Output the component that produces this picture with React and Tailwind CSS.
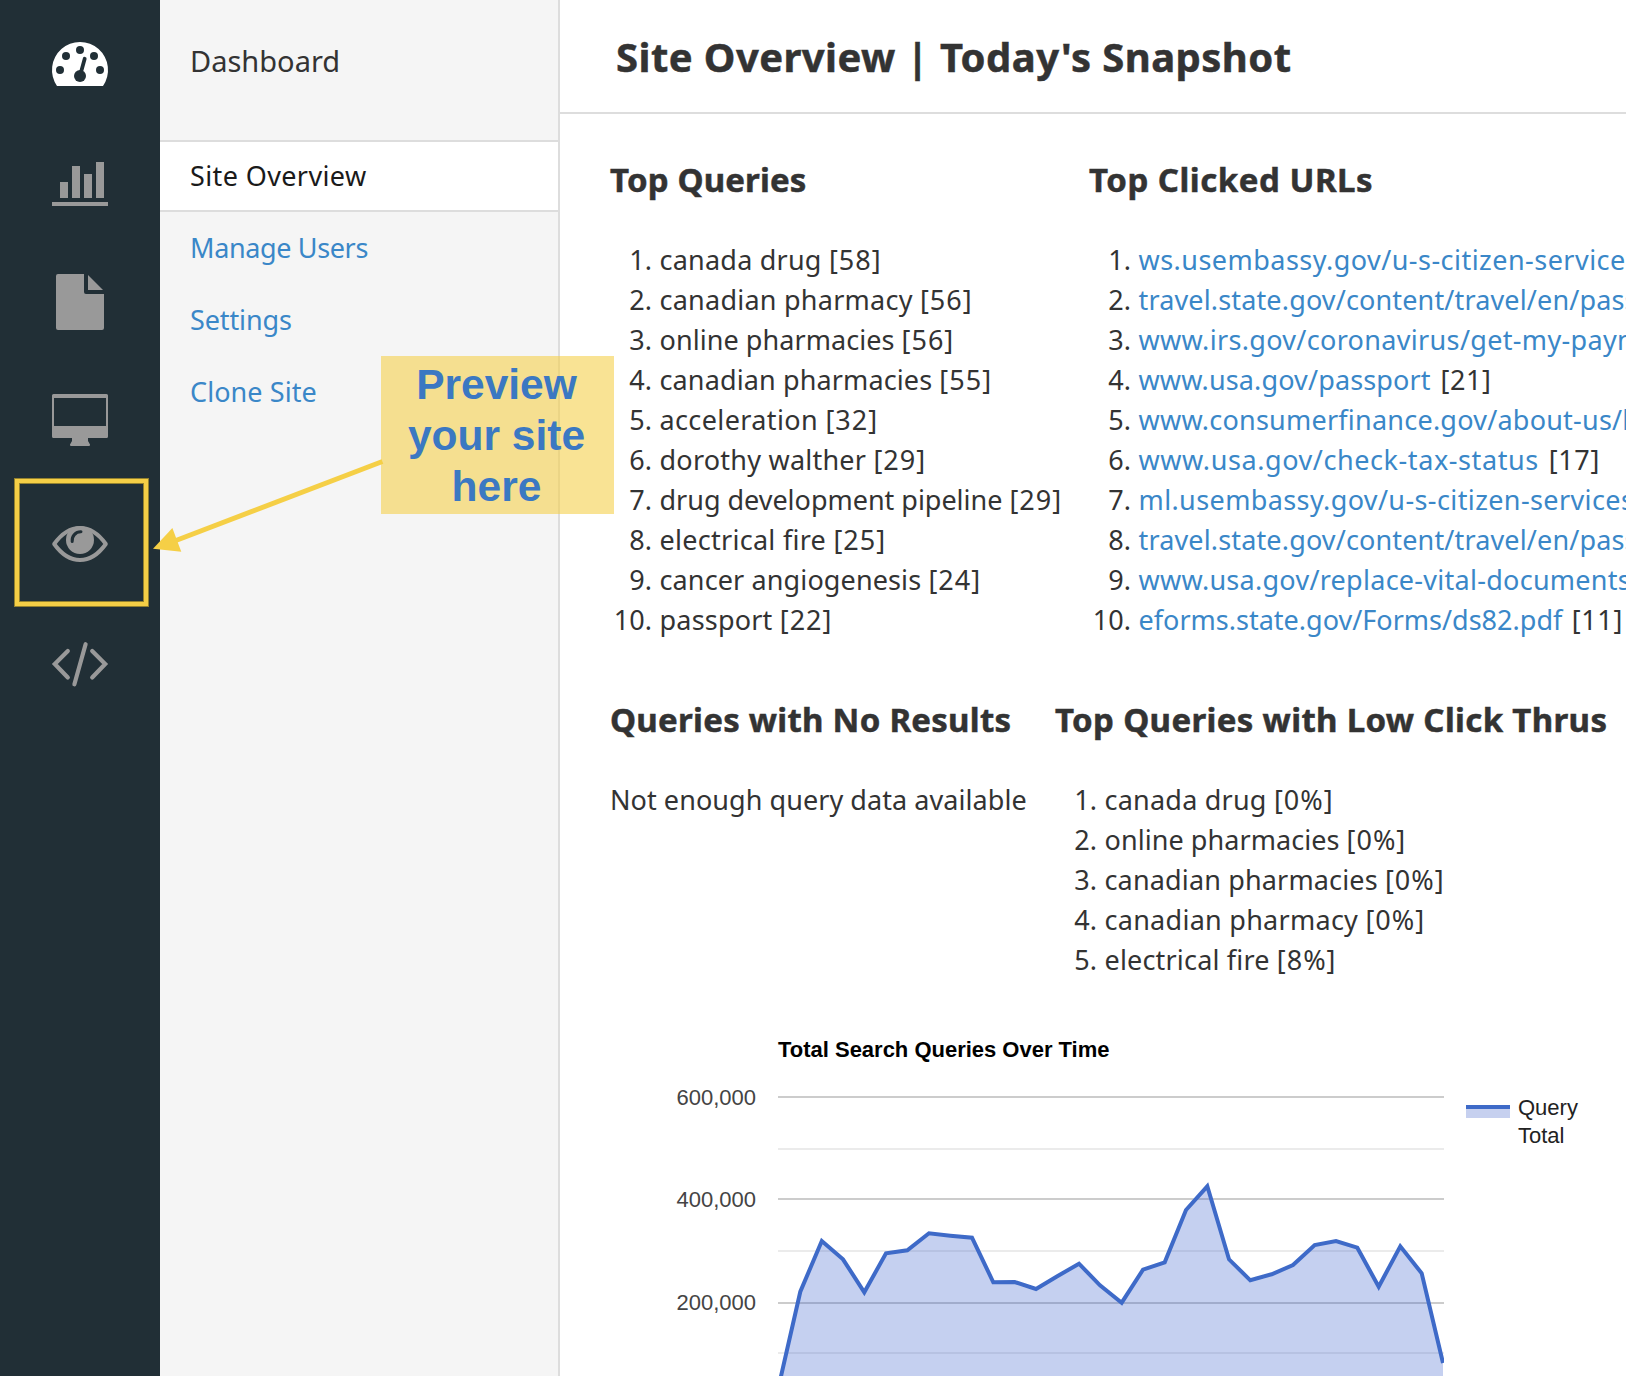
import React from "react";

const TOP_QUERIES = [
  ["canada drug", "tracking-[0.22px]", "[58]"],
  ["canadian pharmacy", "tracking-[0.24px]", "[56]"],
  ["online pharmacies", "tracking-[0.06px]", "[56]"],
  ["canadian pharmacies", "tracking-[0.12px]", "[55]"],
  ["acceleration", "tracking-[0.38px]", "[32]"],
  ["dorothy walther", "tracking-[0.23px]", "[29]"],
  ["drug development pipeline", "tracking-[-0.02px]", "[29]"],
  ["electrical fire", "tracking-[0.28px]", "[25]"],
  ["cancer angiogenesis", "tracking-[0.12px]", "[24]"],
  ["passport", "tracking-[0.2px]", "[22]"],
];

const TOP_URLS = [
  ["ws.usembassy.gov/u-s-citizen-services/", "tracking-[0.47px]"],
  ["travel.state.gov/content/travel/en/passports", "tracking-[0.15px]"],
  ["www.irs.gov/coronavirus/get-my-payment", "tracking-[0.33px]"],
  ["www.usa.gov/passport", "tracking-[0.14px]", "[21]"],
  ["www.consumerfinance.gov/about-us/blog", "tracking-[0.23px]"],
  ["www.usa.gov/check-tax-status", "tracking-[0.58px]", "[17]"],
  ["ml.usembassy.gov/u-s-citizen-services/", "tracking-[0.39px]"],
  ["travel.state.gov/content/travel/en/passports", "tracking-[0.15px]"],
  ["www.usa.gov/replace-vital-documents", "tracking-[0.27px]"],
  ["eforms.state.gov/Forms/ds82.pdf", "tracking-[0.01px]", "[11]"],
];

const LOW_CLICK = [
  ["canada drug", "tracking-[0.22px]", "[0%]"],
  ["online pharmacies", "tracking-[0.06px]", "[0%]"],
  ["canadian pharmacies", "tracking-[0.15px]", "[0%]"],
  ["canadian pharmacy", "tracking-[0.27px]", "[0%]"],
  ["electrical fire", "tracking-[0.18px]", "[8%]"],
];

const SERIES =
  "779,1385 800.3,1291.7 821.8,1241 843,1259.3 864.3,1292.3 886,1253.3 907.3,1250.3 929,1233.3 950.3,1235.7 972,1237.7 993.3,1282.3 1014.7,1282 1036,1289 1057.7,1276 1079,1263.7 1100,1285.3 1121.7,1302.7 1143,1269.7 1164.7,1262.3 1186,1210 1207.3,1186.3 1229,1259.3 1250.3,1280.3 1271.7,1274.3 1293,1265 1314.7,1245 1336,1241 1357.3,1247.7 1378.7,1286.7 1400.3,1246.3 1421.7,1273.3 1443,1363";

function RailIcon({ active, children }) {
  return (
    <a className={`flex h-[120px] items-center justify-center ${active ? "text-white" : "text-[#999999]"}`}>
      <svg className="overflow-visible" width="56" height="56" viewBox="0 0 56 56" fill="currentColor">
        {children}
      </svg>
    </a>
  );
}

function Rail() {
  return (
    <nav className="h-full w-[160px] shrink-0 bg-[#212f36] pt-1">
      <RailIcon active>
        <path d="M5 50 A28 28 0 1 1 51 50 Z" />
        <g fill="#212f36">
          <circle cx="8" cy="34" r="4" />
          <circle cx="14" cy="20" r="4" />
          <circle cx="28" cy="14" r="4" />
          <circle cx="42" cy="20" r="4" />
          <circle cx="48" cy="34" r="4" />
          <circle cx="28" cy="40" r="6" />
        </g>
        <path d="M28.5 38 L32.7 22.8" stroke="#212f36" strokeWidth="3.8" strokeLinecap="round" />
      </RailIcon>
      <RailIcon>
        <path d="M8 26h8v16H8zM20 10h8v32h-8zM32 18h8v24h-8zM44 6h8v36h-8zM0 46h56v4H0z" />
      </RailIcon>
      <RailIcon>
        <g transform="translate(0 -2)">
          <path d="M6 0H32V18Q32 20 34 20H52V54Q52 56 50 56H6Q4 56 4 54V2Q4 0 6 0Z" />
          <path d="M36 1 L51 16 H36 Z" />
        </g>
      </RailIcon>
      <RailIcon>
        <path
          fillRule="evenodd"
          d="M1.5 -2H54.5Q56 -2 56 -0.5V40.5Q56 42 54.5 42H36V45L38 48.5V49Q38 50 37 50H19Q18 50 18 49V48.5L20 45V42H1.5Q0 42 0 40.5V-0.5Q0 -2 1.5 -2ZM2 2V30H54V2Z"
        />
      </RailIcon>
      <RailIcon>
        <path
          d="M2.2 28 C9 18.5 18 12 28 12 S47 18.5 53.8 28 C47 37.5 38 44 28 44 S9 37.5 2.2 28 Z"
          fill="none"
          stroke="currentColor"
          strokeWidth="4"
          strokeLinejoin="round"
        />
        <circle cx="28" cy="24" r="14" />
        <path d="M20.2 25.5 A8.6 8.6 0 0 1 29 15.8" fill="none" stroke="#212f36" strokeWidth="3" strokeLinecap="round" />
      </RailIcon>
      <RailIcon>
        <path
          d="M15.8 15 L2.8 28 L15.8 41.5 M40.2 15 L53.2 28 L40.2 41.5 M33.6 8.2 L22.4 48.3"
          fill="none"
          stroke="currentColor"
          strokeWidth="4.2"
          strokeLinecap="round"
        />
      </RailIcon>
    </nav>
  );
}

function SideMenu() {
  return (
    <aside className="h-full w-[400px] shrink-0 border-r-2 border-[#dddddd] bg-[#f5f5f5] text-[27px] leading-10 text-[#3a87c8]">
      <div className="h-[140px] pt-[41px] pl-[30px] text-[29px] text-[#333333]">Dashboard</div>
      <div className="h-[72px] border-y-2 border-[#dddddd] bg-white pt-[14px] pl-[30px] tracking-[0.38px] text-[#1a1a1a]">
        Site Overview
      </div>
      <div className="h-[72px] pt-4 pl-[30px] tracking-[-0.36px]">Manage Users</div>
      <div className="h-[72px] pt-4 pl-[30px] tracking-[-0.12px]">Settings</div>
      <div className="h-[72px] pt-4 pl-[30px] tracking-[0.08px]">Clone Site</div>
    </aside>
  );
}

function Heading({ className, children }) {
  return (
    <h2
      className={`mb-10 text-[33px] leading-10 font-bold whitespace-nowrap text-[#333333] [-webkit-text-stroke:0.5px_#333333] ${className}`}
    >
      {children}
    </h2>
  );
}

function Ranked({ items, links }) {
  return (
    <ol>
      {items.map(([text, tracking, count], i) => (
        <li key={i} className="flex h-10 text-[27px] leading-10 whitespace-nowrap">
          <span className="mr-[7.5px] w-[42px] shrink-0 text-right">{i + 1}.</span>
          <span className={tracking}>
            {links ? <a className="mr-[2.5px] text-[#3a87c8]">{text}</a> : text}
            {count && " "}
            {count && <span className={links ? "tracking-[0.6px]" : "tracking-[1px]"}>{count}</span>}
          </span>
        </li>
      ))}
    </ol>
  );
}

function Chart() {
  return (
    <svg
      className="mt-10 ml-[100px] block shrink-0 font-['Liberation_Sans',Arial,sans-serif]"
      width="966"
      height="356"
      viewBox="660 1020 966 356"
      fontSize="22"
    >
      <text x="778" y="1057" fontWeight="700" fill="#000000" textLength="331.5">
        Total Search Queries Over Time
      </text>
      <g fill="#444444" textAnchor="end">
        <text x="756" y="1105">600,000</text>
        <text x="756" y="1207">400,000</text>
        <text x="756" y="1310">200,000</text>
      </g>
      <g fill="#ebebeb">
        <rect x="778" y="1148" width="666" height="2" />
        <rect x="778" y="1250" width="666" height="2" />
        <rect x="778" y="1352" width="666" height="2" />
      </g>
      <g fill="#cccccc">
        <rect x="778" y="1096" width="666" height="2" />
        <rect x="778" y="1198" width="666" height="2" />
        <rect x="778" y="1302" width="666" height="2" />
      </g>
      <clipPath id="plot">
        <rect x="778" y="1096" width="666" height="280" />
      </clipPath>
      <g clipPath="url(#plot)">
        <polygon points={SERIES + " 1443,1400 779,1400"} fill="#4062cc" fillOpacity="0.3" />
        <polyline points={SERIES} fill="none" stroke="#3e6ac8" strokeWidth="4" />
      </g>
      <rect x="1466" y="1105" width="44" height="13" fill="#c6d0ef" />
      <rect x="1466" y="1105" width="44" height="4" fill="#3e6ac8" />
      <g fill="#222222">
        <text x="1518" y="1115">Query</text>
        <text x="1518" y="1143">Total</text>
      </g>
    </svg>
  );
}

function Annotations() {
  return (
    <>
      <div className="absolute top-[479px] left-[15px] h-[127px] w-[133px] border-4 border-[#f5cf46] shadow-[0_0_0_1px_#94822f,inset_0_0_0_1px_#94822f]" />
      <div className="absolute top-[356px] left-[381px] h-[158px] w-[233px] bg-[#f5cf46]/58 pt-[3px] pr-[2px] text-center font-['Liberation_Sans',Arial,sans-serif] text-[42.5px] leading-[51px] font-bold text-[#3b78c2]">
        Preview
        <br />
        your site
        <br />
        here
      </div>
      <svg className="absolute top-[450px] left-[145px]" width="245" height="110" viewBox="145 450 245 110">
        <path d="M382.4 461.5 L172 542" stroke="#f5cf46" strokeWidth="5" />
        <path d="M153 548.7 L172.4 528 L181.3 551.8 Z" fill="#f5cf46" />
      </svg>
    </>
  );
}

export default function App() {
  return (
    <div className="relative flex h-[1376px] w-[1626px] overflow-hidden bg-white font-['Noto_Sans',sans-serif] text-[#333333]">
      <Rail />
      <SideMenu />
      <main className="flex min-w-0 flex-1 flex-col overflow-hidden">
        <header className="h-[114px] shrink-0 border-b-2 border-[#dddddd] pt-[37px] pl-14">
          <h1 className="text-[40px] leading-10 font-bold tracking-[0.44px] whitespace-nowrap [-webkit-text-stroke:0.5px_#333333]">
            Site Overview | Today's Snapshot
          </h1>
        </header>
        <section className="mt-[46px] flex h-[480px] shrink-0 pl-[50px]">
          <div className="w-[479px] shrink-0">
            <Heading className="tracking-[0.15px]">Top Queries</Heading>
            <Ranked items={TOP_QUERIES} />
          </div>
          <div className="min-w-0 flex-1">
            <Heading className="tracking-[0.51px]">Top Clicked URLs</Heading>
            <Ranked items={TOP_URLS} links />
          </div>
        </section>
        <section className="mt-[60px] flex h-[280px] shrink-0 pl-[50px]">
          <div className="w-[445px] shrink-0">
            <Heading className="tracking-[0.26px]">Queries with No Results</Heading>
            <p className="text-[27px] leading-10 tracking-[0.06px] whitespace-nowrap">Not enough query data available</p>
          </div>
          <div className="min-w-0 flex-1">
            <Heading className="tracking-[0.34px]">Top Queries with Low Click Thrus</Heading>
            <Ranked items={LOW_CLICK} />
          </div>
        </section>
        <Chart />
      </main>
      <Annotations />
    </div>
  );
}
